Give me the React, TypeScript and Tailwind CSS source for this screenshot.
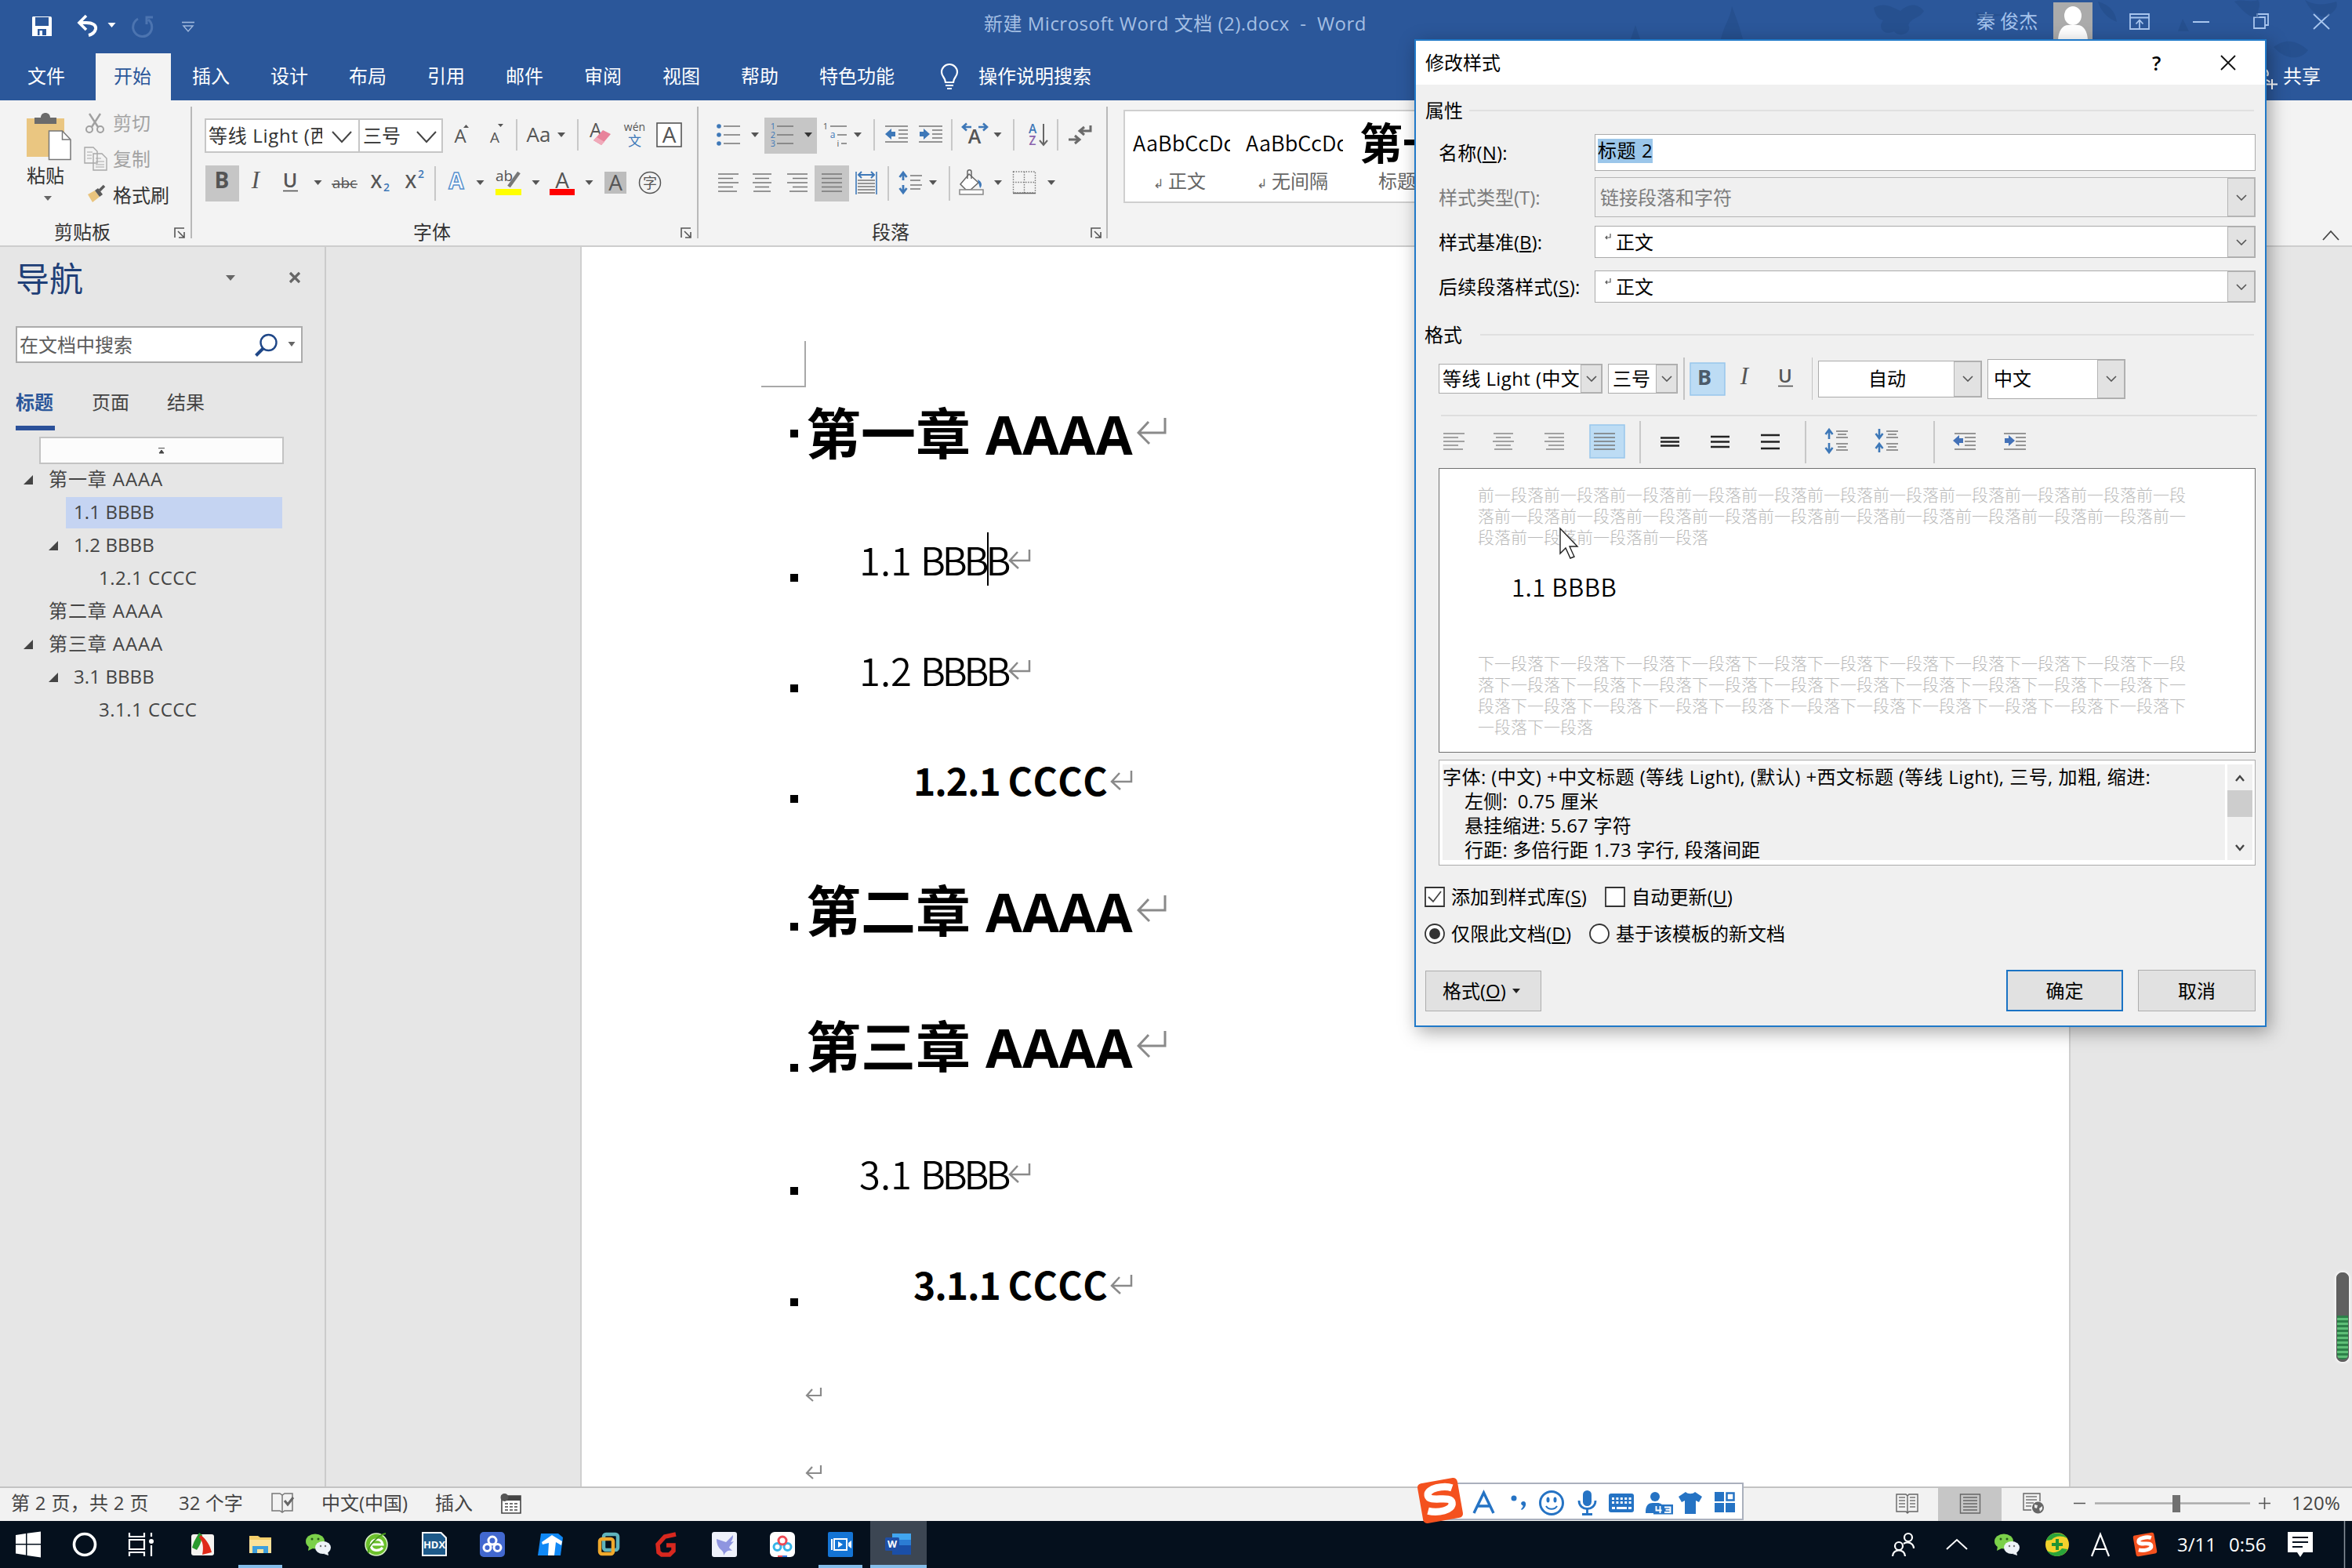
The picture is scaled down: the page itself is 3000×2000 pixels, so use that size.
import React from "react";

type IcProps = { a: number; b: number; y: number; h: number; className?: string; children?: React.ReactNode };

/** Drawing cell spanning a..b horizontally inside a row that starts at y. */
function Ic({ a, b, y, h, className = "", children }: IcProps) {
  return (
    <svg className={`block shrink-0 overflow-visible ${className}`} width={b - a} height={h} viewBox={`${a} ${y} ${b - a} ${h}`}>
      {children}
    </svg>
  );
}

function Caret({ x, y, s = 5, fill = "#555" }: { x: number; y: number; s?: number; fill?: string }) {
  return <path d={`M${x - s} ${y - 3}h${s * 2}l${-s} 6z`} fill={fill} />;
}

function Lines({ rows, c = "#777", w = 1.6 }: { rows: [number, number, number][]; c?: string; w?: number }) {
  return <path d={rows.map(([x1, x2, y]) => `M${x1} ${y}H${x2}`).join("")} stroke={c} strokeWidth={w} fill="none" />;
}

function G({ x, y, s, c = "#555", w = 400, f = "Open Sans", anchor = "middle", children, italic = false }: any) {
  return (
    <text x={x} y={y} fontSize={s} fill={c} fontWeight={w} fontFamily={`"${f}", "Noto Sans CJK SC", sans-serif`} textAnchor={anchor} fontStyle={italic ? "italic" : "normal"}>
      {children}
    </text>
  );
}

const Sep = ({ x, y, h }: { x: number; y: number; h: number }) => <path d={`M${x} ${y}v${h}`} stroke="#c8c8c8" strokeWidth="2" />;
const Launcher = ({ x }: { x: number }) => (
  <path d={`M${x + 1} 303V291H${x + 13}M${x + 5} 295l8 8M${x + 13} 296v7h-7`} stroke="#555" strokeWidth="1.6" fill="none" />
);

/* ---------- title bar ---------- */
function TitleBar() {
  return (
    <div className="relative flex h-[68px] shrink-0 items-start">
      <svg className="absolute top-0 right-0" width="1000" height="128" viewBox="2000 0 1000 128">
        <g fill="#234a87" opacity="0.55">
          <path d="M2195 50c4-18 12-26 14-42 6 16 10 26 14 42zM2080 50l6-18 6 18zM2390 10c14-8 24 0 34 4 10-10 22-10 30 0-6 10-16 8-20 18 6 8-10 18-18 8-12 6-22-4-14-14-8-2-10-8-12-16zM2520 16l40 3-38 4zM2676 2c14 4 22 12 24 26-10-4-20-12-24-26zM2778 40l6-16 8 16zM2850 2c10-4 20 2 30-2 6 8-4 14 2 22-14 2-20-8-32-20zM2940 0c14 8 26 6 40 2 4 10-8 16-14 20-12-2-20-10-26-22zM2900 60c16-12 30-8 44 4-10 14-30 12-44-4z" />
        </g>
      </svg>
      <Ic a={0} b={90} y={0} h={66}>
        <path d="M42 21h22a2 2 0 0 1 2 2v23H41V22z" fill="#fff" />
        <path d="M45 22h17v11H45zM48 37h11v8H48z" fill="#2b579a" />
        <path d="M50.500 39h3.500v6h-3.500z" fill="#fff" />
      </Ic>
      <Ic a={90} b={160} y={0} h={66}>
        <path d="M101 29h9c8 0 13 3 12 8-1 4-5 7-9 8" fill="none" stroke="#fff" strokeWidth="4" />
        <path d="M110 20l-9 9 9 9" fill="none" stroke="#fff" strokeWidth="3.600" />
        <Caret x={142.500} y={32} fill="#fff" />
      </Ic>
      <Ic a={160} b={220} y={0} h={66}>
        <path d="M176 24a12 12 0 1 0 13 1M195 22h-8v9" fill="none" stroke="#4c74b0" strokeWidth="3" />
      </Ic>
      <Ic a={220} b={1255} y={0} h={66}>
        <path d="M232 28.500h16" stroke="#9fb8dc" strokeWidth="1.600" />
        <path d="M234 33l6 7 6-7z" fill="none" stroke="#9fb8dc" strokeWidth="1.400" />
      </Ic>
      <div className="mt-[15px] w-[1266px] tracking-[0.5px] text-[#a5bfe3] whitespace-pre leading-[30px]">新建 Microsoft Word 文档 (2).docx  -  Word</div>
      <div className="mt-[12px] w-[98px] whitespace-pre leading-[30px] text-[#a5c3ec]">秦 俊杰</div>
      <div className="mt-[3px] h-[50px] w-[50px] bg-[#ababab]">
        <svg width="50" height="50" viewBox="0 0 50 50">
          <ellipse cx="25" cy="17" rx="11" ry="12" fill="#fff" />
          <path d="M6 50c0-14 6-21 13-21h12c7 0 13 7 13 21z" fill="#fff" />
        </svg>
      </div>
      <Ic a={2669} b={2770} y={0} h={54}>
        <path d="M2717 18h24v19h-24zM2717 22.500h24M2729 36v-10M2724.500 30.500l4.500-5 4.500 5" fill="none" stroke="#a9c6ee" strokeWidth="1.800" />
      </Ic>
      <Ic a={2770} b={2850} y={0} h={54}>
        <path d="M2797 28h21" stroke="#a9c6ee" strokeWidth="2" />
      </Ic>
      <Ic a={2850} b={2920} y={0} h={54}>
        <path d="M2875 22h14v14h-14zM2879 22v-4h14v14h-4" fill="none" stroke="#a9c6ee" strokeWidth="1.800" />
      </Ic>
      <Ic a={2920} b={3000} y={0} h={54}>
        <path d="M2951 18l20 19M2971 18l-20 19" stroke="#a9c6ee" strokeWidth="1.800" />
      </Ic>
    </div>
  );
}

function TabRow() {
  const tabs = ["插入", "设计", "布局", "引用", "邮件", "审阅", "视图", "帮助", "特色功能"];
  return (
    <div className="relative flex h-[60px] shrink-0 items-start leading-[58px] text-white">
      <div className="w-[122px] pl-[35px]">文件</div>
      <div className="h-[60px] w-[96px] bg-[#f3f3f3] pl-[23px] text-[#2b579a]">开始</div>
      <div className="flex w-[982px] pl-[27px]">
        {tabs.map((t) => (
          <div key={t} className="w-[100px] shrink-0 whitespace-nowrap">{t}</div>
        ))}
      </div>
      <Ic a={1200} b={1248} y={68} h={60}>
        <path d="M1206 105c0-6-5-7-5-13a10 10 0 0 1 20 0c0 6-5 7-5 13zM1206 109h10M1208 113h6" fill="none" stroke="#fff" strokeWidth="2.200" />
      </Ic>
      <div className="w-[1638px]">操作说明搜索</div>
      <Ic a={2886} b={2912} y={68} h={60}>
        <path d="M2887 88a6 6 0 0 1 5 9M2889 102c3 0 5 1 6 3M2898 101v13M2891 107.500h14" fill="none" stroke="#fff" strokeWidth="2" />
      </Ic>
      <div>共享</div>
    </div>
  );
}

/* ---------- ribbon ---------- */
function ClipboardGroup() {
  return (
    <div className="flex w-[246px] shrink-0 flex-col">
      <div className="flex h-[153px]">
        <div className="flex w-[104px] flex-col pl-[34px] pt-[16px]">
          <Ic a={34} b={90} y={144} h={60}>
            <path d="M34 151h48v49H34z" fill="#eac681" />
            <path d="M44 150h8c0-8 12-8 12 0h8v8H44z" fill="#6b6b6b" />
            <path d="M62.500 167h17l10.500 11v25.500H62.500z" fill="#fff" stroke="#777" strokeWidth="1.500" />
            <path d="M79.500 167v11H90" fill="none" stroke="#777" strokeWidth="1.500" />
          </Ic>
          <div className="mt-[5px] leading-[30px]">粘贴</div>
          <svg className="mt-[11px] ml-[22px]" width="10" height="6" viewBox="0 0 10 6"><path d="M0 0h10L5 6z" fill="#666" /></svg>
        </div>
        <div className="flex flex-col pt-[6px] leading-[46px]">
          <div className="flex text-[#a3a3a3]">
            <Ic a={104} b={144} y={134} h={46}>
              <path d="M114 145l11 17M128 145l-11 17" stroke="#a0a0a0" strokeWidth="2.400" fill="none" />
              <circle cx="114" cy="165" r="4" fill="none" stroke="#a0a0a0" strokeWidth="2" />
              <circle cx="128" cy="165" r="4" fill="none" stroke="#a0a0a0" strokeWidth="2" />
            </Ic>
            剪切
          </div>
          <div className="flex text-[#a3a3a3]">
            <Ic a={104} b={144} y={180} h={46}>
              <path d="M108 188h11l5 5v15h-16zM119 196h11l6 6v15h-17z" fill="#f3f3f3" stroke="#a8a8a8" strokeWidth="1.400" />
              <Lines c="#a8a8a8" w={1.200} rows={[[111, 118, 194], [111, 117, 198], [111, 117, 202], [122, 129, 202], [122, 133, 206], [122, 133, 210], [122, 133, 213]]} />
            </Ic>
            复制
          </div>
          <div className="flex">
            <Ic a={104} b={144} y={226} h={46}>
              <path d="M112 248l9-5 6 8-9 7z" fill="#e9c47e" />
              <path d="M121 243l4-3 6 8-4 3z" fill="#5a5a5a" />
              <path d="M127 243l6-6" stroke="#5a5a5a" strokeWidth="3.500" />
            </Ic>
            格式刷
          </div>
        </div>
      </div>
      <div className="flex h-[30px] leading-[30px]">
        <div className="w-[217px] pl-[69px]">剪贴板</div>
        <Ic a={217} b={243} y={281} h={30}><Launcher x={222} /></Ic>
      </div>
    </div>
  );
}

const GroupLine = () => <div className="-ml-[3px] mr-[1px] mt-[8px] h-[168px] w-[2px] shrink-0 bg-[#b9b9b9]" />;

function FontGroup() {
  const y = 151, h = 44, y2 = 211, h2 = 46;
  return (
    <div className="flex w-[646px] shrink-0 flex-col">
      <div className="mt-[23px] flex h-[44px] pl-[15px]">
        <div className="flex h-[44px] w-[198px] shrink-0 items-center border-2 border-[#c6c6c6] bg-white pl-[3px]">
          <div className="w-[147px] shrink-0 overflow-hidden pr-[2px] whitespace-nowrap leading-[30px]"><div className="w-[145px] overflow-hidden tracking-[0.7px]">等线 Light (西</div></div>
          <Ic a={413} b={455} y={y} h={40}><path d="M424 166l12 13 12-13" fill="none" stroke="#444" strokeWidth="2" /></Ic>
        </div>
        <div className="-ml-[2px] flex h-[44px] w-[108px] shrink-0 items-center border-2 border-[#c6c6c6] bg-white pl-[4px]">
          <div className="w-[58px] shrink-0 leading-[30px]">三号</div>
          <Ic a={521} b={563} y={y} h={40}><path d="M532 166l12 13 12-13" fill="none" stroke="#444" strokeWidth="2" /></Ic>
        </div>
        <Ic a={565} b={612} y={y} h={h}><G x={587} y={182} s={24}>A</G><path d="M591 163l3.500-4 3.500 4z" fill="#555" /></Ic>
        <Ic a={612} b={660} y={y} h={h}><G x={631} y={182} s={19}>A</G><path d="M635 158l3.500 4 3.500-4z" fill="#555" /><Sep x={659} y={152} h={40} /></Ic>
        <Ic a={660} b={738} y={y} h={h}><G x={687} y={181} s={26}>Aa</G><Caret x={716} y={172} /><Sep x={737} y={152} h={40} /></Ic>
        <Ic a={738} b={790} y={y} h={h}>
          <G x={760} y={175} s={25}>A</G>
          <path d="M757 179l12-13 10 5-12 14z" fill="#e8839b" /><path d="M757 179l4-4 10 6-4 4z" fill="#f0a9b9" />
        </Ic>
        <Ic a={790} b={830} y={y} h={h}><G x={809.500} y={167} s={14}>wén</G><G x={809.500} y={186} s={17} c="#3e78b8">文</G></Ic>
        <Ic a={830} b={880} y={y} h={h}><rect x="838" y="157" width="31" height="30" fill="#fff" stroke="#555" strokeWidth="1.600" /><G x={853.500} y={182} s={28}>A</G></Ic>
      </div>
      <div className="mt-[16px] flex h-[46px] pl-[16px]">
        <Ic a={262} b={305} y={y2} h={h2} className="bg-[#c6c6c6]"><G x={283} y={240} s={28} w={700}>B</G></Ic>
        <Ic a={305} b={347} y={y2} h={h2}><G x={326} y={240} s={31} f="Liberation Serif" w={400} italic>I</G></Ic>
        <Ic a={347} b={418} y={y2} h={h2}><G x={370} y={239} s={25} w={600}>U</G><path d="M361 243.500h19" stroke="#555" strokeWidth="1.600" /><Caret x={405.500} y={233} /></Ic>
        <Ic a={418} b={463} y={y2} h={h2}><G x={439.500} y={240} s={19}>abc</G><path d="M423 235h33" stroke="#555" strokeWidth="1.600" /></Ic>
        <Ic a={463} b={507} y={y2} h={h2}><G x={480} y={240} s={23} w={600}>X</G><G x={493} y={244} s={14} w={600} c="#3e78b8">2</G></Ic>
        <Ic a={507} b={556} y={y2} h={h2}><G x={524} y={240} s={23} w={600}>X</G><G x={537} y={227} s={14} w={600} c="#3e78b8">2</G><Sep x={555} y={212} h={44} /></Ic>
        <Ic a={556} b={625} y={y2} h={h2}>
          <text x="582" y="241" fontSize="28" fontFamily='"Open Sans"' fontWeight="700" textAnchor="middle" fill="#fff" stroke="#5b93cf" strokeWidth="1.500">A</text>
          <Caret x={612.500} y={233} />
        </Ic>
        <Ic a={625} b={695} y={y2} h={h2}>
          <G x={643} y={231} s={19}>ab</G><path d="M662 220l-13 18" stroke="#777" strokeWidth="4.500" /><path d="M632 241h33v8h-33z" fill="#ff0" /><Caret x={683.500} y={233} />
        </Ic>
        <Ic a={695} b={765} y={y2} h={h2}><G x={717} y={240} s={28}>A</G><path d="M701 241h32v8h-32z" fill="#f00" /><Caret x={751.500} y={233} /></Ic>
        <Ic a={765} b={807} y={y2} h={h2}><path d="M771 219h28v28h-28z" fill="#bdbdbd" /><G x={785} y={243} s={28}>A</G></Ic>
        <Ic a={807} b={860} y={y2} h={h2}><circle cx="829" cy="233" r="13.500" fill="none" stroke="#555" strokeWidth="1.500" /><G x={829} y={240} s={18}>字</G></Ic>
      </div>
      <div className="mt-[24px] flex h-[30px] leading-[30px]">
        <div className="w-[614px] pl-[281px]">字体</div>
        <Ic a={860} b={890} y={281} h={30}><Launcher x={868} /></Ic>
      </div>
    </div>
  );
}

const blue = "#3e78b8";
const arrowL = "l8-7v4h5v6h-5v4z";
const arrowR = "l-8-7v4h-5v6h5v4z";

function ParagraphGroup() {
  const y = 150, h = 46, y2 = 211, h2 = 46;
  return (
    <div className="flex w-[522px] shrink-0 flex-col">
      <div className="mt-[22px] flex h-[46px] pl-[8px]">
        <Ic a={900} b={975} y={y} h={h}>
          {[161, 172, 183].map((v) => <circle key={v} cx="917" cy={v} r="2.800" fill={blue} />)}
          <Lines rows={[[923, 944, 161], [923, 944, 172], [923, 944, 183]]} /><Caret x={963} y={172} />
        </Ic>
        <Ic a={975} b={1042} y={y} h={h} className="bg-[#c6c6c6]">
          <G x={986} y={165} s={11} c={blue}>1</G><G x={986} y={176} s={11} c={blue}>2</G><G x={986} y={187} s={11} c={blue}>3</G>
          <Lines rows={[[991, 1012, 161], [991, 1012, 172], [991, 1012, 183]]} /><Caret x={1031} y={172} fill="#333" />
        </Ic>
        <Ic a={1042} b={1116} y={y} h={h}>
          <G x={1053} y={165} s={11}>1</G><G x={1062} y={176} s={12} c={blue}>a</G><G x={1069} y={187} s={11}>i</G>
          <Lines rows={[[1059, 1080, 161], [1068, 1080, 172], [1073, 1080, 183]]} /><Caret x={1094} y={172} /><Sep x={1115} y={152} h={40} />
        </Ic>
        <Ic a={1116} b={1165} y={y} h={h}>
          <Lines rows={[[1129, 1158, 161], [1146, 1158, 166], [1146, 1158, 171], [1146, 1158, 176], [1129, 1158, 181]]} /><path d={"M1129 171" + arrowL} fill={blue} />
        </Ic>
        <Ic a={1165} b={1215} y={y} h={h}>
          <Lines rows={[[1172, 1202, 161], [1189, 1202, 166], [1189, 1202, 171], [1189, 1202, 176], [1172, 1202, 181]]} /><path d={"M1186 171" + arrowR} fill={blue} /><Sep x={1214} y={152} h={40} />
        </Ic>
        <Ic a={1215} b={1294} y={y} h={h}>
          <G x={1243} y={183} s={25} w={600}>A</G>
          <path d="M1239 162h-10M1233 157.500l-5 4.500 5 4.500M1248 162h10M1254 157.500l5 4.500-5 4.500" stroke={blue} strokeWidth="2.600" fill="none" /><Caret x={1272.500} y={172} /><Sep x={1293} y={152} h={40} />
        </Ic>
        <Ic a={1294} b={1350} y={y} h={h}>
          <G x={1317} y={170} s={15.500} w={600} c={blue}>A</G><G x={1317} y={185} s={15.500} w={600} c="#8a62ad">Z</G><path d="M1331 158v26M1326 179l5 6 5-6" stroke="#666" strokeWidth="2" fill="none" /><Sep x={1349} y={152} h={40} />
        </Ic>
        <Ic a={1350} b={1400} y={y} h={h}>
          <path d="M1391 160v7h-13M1383 162l-6 5 6 5M1363 178h13M1371 173l6 5-6 5" stroke="#6b6b6b" strokeWidth="3" fill="none" />
        </Ic>
      </div>
      <div className="mt-[15px] flex h-[46px] pl-[8px]">
        <Ic a={900} b={950} y={y2} h={h2}><Lines rows={[[916, 942, 222], [916, 935, 227.500], [916, 942, 233], [916, 935, 238.500], [916, 940, 244]]} /></Ic>
        <Ic a={950} b={994} y={y2} h={h2}><Lines rows={[[960, 984, 222], [963, 981, 227.500], [960, 984, 233], [963, 981, 238.500], [961, 983, 244]]} /></Ic>
        <Ic a={994} b={1039} y={y2} h={h2}><Lines rows={[[1004, 1030, 222], [1011, 1030, 227.500], [1004, 1030, 233], [1011, 1030, 238.500], [1007, 1030, 244]]} /></Ic>
        <Ic a={1039} b={1083} y={y2} h={h2} className="bg-[#c6c6c6]"><Lines rows={[[1048, 1074, 222], [1048, 1074, 227.500], [1048, 1074, 233], [1048, 1074, 238.500], [1048, 1074, 244]]} /></Ic>
        <Ic a={1083} b={1134} y={y2} h={h2}>
          <path d="M1092 219v29M1118 219v29" stroke={blue} strokeWidth="1.600" /><path d="M1095 223h20M1099 219l-4 4 4 4M1111 219l4 4-4 4" stroke={blue} strokeWidth="2" fill="none" />
          <Lines rows={[[1094, 1116, 230], [1094, 1116, 234], [1094, 1116, 238], [1094, 1116, 242], [1094, 1116, 246]]} /><Sep x={1133} y={212} h={44} />
        </Ic>
        <Ic a={1134} b={1212} y={y2} h={h2}>
          <path d="M1152 221v9M1152 236v9M1147.500 226l4.500-6 4.500 6M1147.500 240l4.500 6 4.500-6" stroke={blue} strokeWidth="2.800" fill="none" />
          <Lines rows={[[1161, 1176, 224], [1161, 1174, 230], [1161, 1176, 236], [1161, 1174, 241]]} /><Caret x={1190} y={233} /><Sep x={1211} y={212} h={44} />
        </Ic>
        <Ic a={1212} b={1283} y={y2} h={h2}>
          <path d="M1236 222l12 11-10 9h-6l-7-7z" fill="#fff" stroke="#666" strokeWidth="1.500" /><path d="M1234 228v-9c0-3 5-3 5 0v9" fill="none" stroke="#666" strokeWidth="1.500" /><path d="M1247 229c6 3 6 8 3 11z" fill={blue} />
          <path d="M1224 242h30v6h-30z" fill="#fff" stroke="#888" strokeWidth="1.500" /><Caret x={1273} y={233} />
        </Ic>
        <Ic a={1283} b={1360} y={y2} h={h2}>
          <path d="M1292.500 219h28v27h-28zM1306.500 219v27M1292 232.500h28" fill="none" stroke="#777" strokeWidth="1.400" strokeDasharray="1.500 1.700" /><path d="M1292 246.500h29" stroke="#666" strokeWidth="1.500" /><Caret x={1341} y={233} />
        </Ic>
      </div>
      <div className="mt-[24px] flex h-[30px] leading-[30px]">
        <div className="w-[493px] pl-[220px]">段落</div>
        <Ic a={1385} b={1413} y={281} h={30}><Launcher x={1391} /></Ic>
      </div>
    </div>
  );
}

function StyleGallery() {
  return (
    <div className="ml-[19px] mt-[12px] flex h-[119px] w-[600px] shrink-0 border-2 border-[#cfcfcf] bg-white">
      <div className="flex w-[144px] flex-col pl-[10px]">
        <div className="mt-[22px] w-[124px] overflow-hidden font-['Noto_Sans_CJK_SC'] text-[27px] leading-[36px] font-[350] whitespace-nowrap text-black">AaBbCcDd</div>
        <div className="mt-[16px] pl-[26px] leading-[30px] text-[#666]"><span className="mr-[3px] inline-block w-[16px] text-[16px]">↲</span>正文</div>
      </div>
      <div className="flex w-[147px] flex-col pl-[10px]">
        <div className="mt-[22px] w-[124px] overflow-hidden font-['Noto_Sans_CJK_SC'] text-[27px] leading-[36px] font-[350] whitespace-nowrap text-black">AaBbCcDd</div>
        <div className="mt-[16px] pl-[14px] leading-[30px] whitespace-nowrap text-[#666]"><span className="mr-[3px] inline-block w-[16px] text-[16px]">↲</span>无间隔</div>
      </div>
      <div className="flex flex-col pl-[8px]">
        <div className="mt-[8px] h-[60px] font-['Noto_Sans_CJK_SC'] text-[55px] leading-[58px] font-bold whitespace-nowrap text-black">第一</div>
        <div className="mt-[6px] pl-[24px] leading-[30px] text-[#666]">标题</div>
      </div>
    </div>
  );
}

function Ribbon() {
  return (
    <div className="flex h-[187px] shrink-0 border-b-2 border-[#cdcdcd] bg-[#f3f3f3] text-[#333]">
      <ClipboardGroup />
      <GroupLine />
      <FontGroup />
      <GroupLine />
      <ParagraphGroup />
      <GroupLine />
      <StyleGallery />
      <Ic a={2940} b={3000} y={128} h={185} className="ml-auto"><path d="M2963 306l10-11 10 11" fill="none" stroke="#444" strokeWidth="1.800" /></Ic>
    </div>
  );
}

/* ---------- navigation pane ---------- */
const outline: { t: string; lv: number; open?: boolean; on?: boolean }[] = [
  { t: "第一章 AAAA", lv: 0, open: true },
  { t: "1.1 BBBB", lv: 1, on: true },
  { t: "1.2 BBBB", lv: 1, open: true },
  { t: "1.2.1 CCCC", lv: 2 },
  { t: "第二章 AAAA", lv: 0 },
  { t: "第三章 AAAA", lv: 0, open: true },
  { t: "3.1 BBBB", lv: 1, open: true },
  { t: "3.1.1 CCCC", lv: 2 },
];
const indent = ["pl-[30px]", "pl-[62px]", "pl-[94px]"];
const spacing = ["tracking-[0.9px]", "tracking-[0.1px]", "tracking-[0.5px]"];

function NavPane() {
  return (
    <div className="flex w-[416px] shrink-0 flex-col border-r-2 border-[#cbcbcb]">
      <div className="flex h-[82px] items-center pl-[20px]">
        <div className="w-[268px] text-[43px] leading-[60px] text-[#1f3f77]">导航</div>
        <svg className="mt-[-4px] block" width="95" height="16" viewBox="288 346 95 16">
          <path d="M288 351h12l-6 7z" fill="#666" />
          <path d="M370 348l12 12M382 348l-12 12" stroke="#666" strokeWidth="3.200" />
        </svg>
      </div>
      <div className="mt-[19px] ml-[20px] flex h-[47px] w-[366px] items-center border-2 border-[#ababab] bg-white pl-[3px] text-[#5c5c5c]">
        <div className="w-[290px] leading-[30px]">在文档中搜索</div>
        <Ic a={315} b={380} y={418} h={43}>
          <circle cx="342.500" cy="437" r="10" fill="none" stroke="#1f4788" strokeWidth="2.400" />
          <path d="M335.500 444.500l-9 9" stroke="#1f4788" strokeWidth="4" />
          <Caret x={372} y={439} s={4.500} fill="#666" />
        </Ic>
      </div>
      <div className="mt-[35px] flex h-[30px] pl-[20px] leading-[30px] text-[#444]">
        <div className="w-[97px] font-bold text-[#2b579a]">标题</div>
        <div className="w-[96px]">页面</div>
        <div>结果</div>
      </div>
      <div className="mt-[15px] ml-[20px] h-[6px] w-[50px] bg-[#2b519a]" />
      <div className="mt-[8px] ml-[50px] flex h-[35px] w-[312px] items-center justify-center border-2 border-[#c3c3c3] bg-[#fcfcfc]">
        <svg width="8" height="8" viewBox="0 0 8 8"><path d="M0 .7h8M1 7h6L4 3z" stroke="#444" strokeWidth="1" fill="#444" /></svg>
      </div>
      <div className="-mt-[1px]">
        {outline.map((o) => (
          <div key={o.t} className={`flex h-[42px] items-center text-[#444] ${indent[o.lv]}`}>
            <div className="w-[22px] shrink-0">
              {o.open && <svg width="12" height="12" viewBox="0 0 12 12"><path d="M12 0v12H0z" fill="#444" /></svg>}
            </div>
            <div className={`flex h-[40px] items-center pb-[2px] pl-[10px] leading-[38px] whitespace-nowrap ${spacing[o.lv]} ${o.on ? "w-[276px] bg-[#c5d4f2]" : ""}`}>{o.t}</div>
          </div>
        ))}
      </div>
    </div>
  );
}

/* ---------- document ---------- */
function Ret({ big = false }: { big?: boolean }) {
  return big ? (
    <svg className="mt-[33px] ml-[2px] shrink-0" width="38" height="36" viewBox="0 0 38 36"><path d="M36 0v19H2M15 5L2 19l14 14" fill="none" stroke="#8a8a8a" strokeWidth="3" /></svg>
  ) : (
    <svg className="mt-[38px] shrink-0" width="29" height="28" viewBox="0 0 29 28"><path d="M27 3v14H2M12 6L2 17l11 10" fill="none" stroke="#8a8a8a" strokeWidth="2.500" /></svg>
  );
}

type LineProps = { kind: "h1" | "h2" | "h3"; top: string; dot: string; width: string; children: React.ReactNode };
const kinds = {
  h1: "ml-[9px] mr-[4px] text-[70px] leading-[100px] font-bold whitespace-pre",
  h2: "ml-[77px] mr-[1px] text-[49px] leading-[105px] font-[350] whitespace-pre",
  h3: "ml-[146px] mr-[1px] text-[48px] leading-[105px] font-bold whitespace-pre",
};

function DocLine({ kind, top, dot, width, children }: LineProps) {
  return (
    <div className={`flex h-[110px] shrink-0 items-start pl-[266px] text-black ${top}`}>
      <div className={`mr-[1px] h-[10px] w-[10px] shrink-0 bg-black ${dot}`} />
      <div className={`shrink-0 ${kinds[kind]} ${width}`}>{children}</div>
      <Ret big={kind === "h1"} />
    </div>
  );
}

function Chapter({ name }: { name: string }) {
  return <>{name}<span className="ml-[19px] font-['Open_Sans'] text-[68px] font-bold">AAAA</span></>;
}

const Sub = ({ n, t }: { n: string; t: string }) => <>{n} <span className="tracking-[-4.1px]">{t}</span></>;
const SubSub = ({ n, t }: { n: string; t: string }) => <><span className="tracking-[-1.1px]">{n} </span><span className="tracking-[2.3px]">{t}</span></>;

function Page() {
  return (
    <div className="ml-[324px] flex w-[1901px] shrink-0 flex-col overflow-hidden border-x-2 border-[#cfcfcf] bg-white font-['Noto_Sans_CJK_SC',sans-serif]">
      <div className="mt-[120px] ml-[229px] h-[59px] w-[57px] shrink-0 border-r-2 border-b-2 border-[#a8a8a8]" />
      <DocLine kind="h1" top="mt-[6px]" dot="mt-[48px]" width="w-[416px]"><Chapter name="第一章" /></DocLine>
      <DocLine kind="h2" top="mt-[50px]" dot="mt-[72px]" width="w-[189px]">
        <span className="relative"><Sub n="1.1" t="BBBB" /><span className="absolute top-[2px] left-[163px] h-[68px] w-[2px] bg-black" /></span>
      </DocLine>
      <DocLine kind="h2" top="mt-[31px]" dot="mt-[72px]" width="w-[189px]"><Sub n="1.2" t="BBBB" /></DocLine>
      <DocLine kind="h3" top="mt-[31px]" dot="mt-[72px]" width="w-[250px]"><SubSub n="1.2.1" t="CCCC" /></DocLine>
      <DocLine kind="h1" top="mt-[57px]" dot="mt-[68px]" width="w-[416px]"><Chapter name="第二章" /></DocLine>
      <DocLine kind="h1" top="mt-[63px]" dot="mt-[75px]" width="w-[416px]"><Chapter name="第三章" /></DocLine>
      <DocLine kind="h2" top="mt-[51px]" dot="mt-[71px]" width="w-[189px]"><Sub n="3.1" t="BBBB" /></DocLine>
      <DocLine kind="h3" top="mt-[32px]" dot="mt-[71px]" width="w-[250px]"><SubSub n="3.1.1" t="CCCC" /></DocLine>
      <svg className="mt-[74px] ml-[285px] shrink-0" width="22" height="20" viewBox="0 0 22 20"><path d="M20 1v10H2M9 3l-7 8 8 7" fill="none" stroke="#8a8a8a" strokeWidth="2.200" /></svg>
      <svg className="mt-[79px] ml-[285px] shrink-0" width="22" height="20" viewBox="0 0 22 20"><path d="M20 1v10H2M9 3l-7 8 8 7" fill="none" stroke="#8a8a8a" strokeWidth="2.200" /></svg>
    </div>
  );
}

/* ---------- dialog ---------- */
function Drop({ w }: { w: "w-[27px]" | "w-[35px]" }) {
  return (
    <div className={`flex h-full shrink-0 items-center justify-center border border-[#b4b4b4] bg-[#e2e2e2] ${w}`}>
      <svg width="14" height="8" viewBox="0 0 14 8"><path d="M1 1l6 6 6-6" fill="none" stroke="#555" strokeWidth="1.600" /></svg>
    </div>
  );
}

const Tiny = () => (
  <svg className="mr-[6px] mb-[14px] shrink-0" width="8" height="8" viewBox="0 0 8 8"><path d="M7 0v5H1M3 3L1 5l2 2" fill="none" stroke="#555" strokeWidth="1.200" /></svg>
);

const before = ["前一段落前一段落前一段落前一段落前一段落前一段落前一段落前一段落前一段落前一段落前一段", "落前一段落前一段落前一段落前一段落前一段落前一段落前一段落前一段落前一段落前一段落前一", "段落前一段落前一段落前一段落"];
const after = ["下一段落下一段落下一段落下一段落下一段落下一段落下一段落下一段落下一段落下一段落下一段", "落下一段落下一段落下一段落下一段落下一段落下一段落下一段落下一段落下一段落下一段落下一", "段落下一段落下一段落下一段落下一段落下一段落下一段落下一段落下一段落下一段落下一段落下", "一段落下一段落"];

function Dialog() {
  const y = 537, h = 54;
  return (
    <div className="absolute top-[50px] left-[1804px] flex h-[1260px] w-[1087px] flex-col border-2 border-[#2079c8] bg-[#f0f0f0] leading-[30px] text-black shadow-[4px_6px_22px_rgba(0,0,0,0.35)]">
      <div className="flex h-[56px] shrink-0 items-center bg-white pl-[12px]">
        <div className="w-[927px]">修改样式</div>
        <div className="w-[87px] text-[25px] font-semibold">?</div>
        <svg width="20" height="20" viewBox="0 0 20 20"><path d="M1 1l18 18M19 1L1 19" stroke="#111" strokeWidth="1.800" /></svg>
      </div>
      <div className="mt-[18px] flex h-[30px] items-center pl-[12px]">
        <div className="w-[56px]">属性</div>
        <div className="mr-[14px] h-[2px] flex-1 bg-[#e0e0e0]" />
      </div>
      <div className="mt-[15px] flex h-[47px] items-center pl-[29px]">
        <div className="w-[199px] tracking-[0.2px]">名称(<u>N</u>):</div>
        <div className="h-full w-[843px] border-[1.500px] border-[#ababab] bg-white pt-[5px] pl-[3px]"><span className="inline-block h-[31px] bg-[#9bc6ea] leading-[30px] tracking-[0.6px]">标题 2</span></div>
      </div>
      <div className="mt-[8px] flex h-[51px] items-center pl-[29px] text-[#7d7d7d]">
        <div className="w-[199px]">样式类型(T):</div>
        <div className="flex h-full w-[843px] items-center justify-between border-[1.500px] border-[#b5b5b5] pl-[6px]">链接段落和字符<Drop w="w-[35px]" /></div>
      </div>
      <div className="mt-[11px] flex h-[41px] items-center pl-[29px]">
        <div className="w-[199px]">样式基准(<u>B</u>):</div>
        <div className="flex h-full w-[843px] items-center border-[1.500px] border-[#ababab] bg-white pl-[12px]"><Tiny /><span className="flex-1">正文</span><Drop w="w-[35px]" /></div>
      </div>
      <div className="mt-[16px] flex h-[41px] items-center pl-[29px]">
        <div className="w-[199px] tracking-[0.3px] whitespace-nowrap">后续段落样式(<u>S</u>):</div>
        <div className="flex h-full w-[843px] items-center border-[1.500px] border-[#ababab] bg-white pl-[12px]"><Tiny /><span className="flex-1">正文</span><Drop w="w-[35px]" /></div>
      </div>
      <div className="mt-[26px] flex h-[30px] items-center pl-[11px]">
        <div className="w-[71px]">格式</div>
        <div className="mr-[14px] h-[2px] flex-1 bg-[#e0e0e0]" />
      </div>
      <div className="mt-[14px] flex h-[54px] items-center pl-[29px]">
        <div className="flex h-[38px] w-[209px] items-center justify-between border-[1.500px] border-[#ababab] bg-white pl-[4px]"><div className="w-[176px] overflow-hidden tracking-[0.4px] whitespace-nowrap">等线 Light (中文</div><Drop w="w-[27px]" /></div>
        <div className="ml-[7px] flex h-[38px] w-[89px] items-center border-[1.500px] border-[#ababab] bg-white pl-[5px]"><div className="flex-1">三号</div><Drop w="w-[27px]" /></div>
        <div className="ml-[7px] h-[54px] w-[1.500px] bg-[#c4c4c4]" />
        <svg className="ml-[6px]" width="46" height="43" viewBox="2155 461 46 43"><rect x="2156" y="462" width="44" height="41" fill="#bddcf4" stroke="#98c6ec" strokeWidth="1.500" /><G x={2174} y={490} s={27} w={700} c="#4c5b6b">B</G></svg>
        <svg width="110" height="54" viewBox="2201 456 110 54"><G x={2225} y={490} s={31} f="Liberation Serif" w={400} italic>I</G><G x={2277} y={488} s={24} w={600}>U</G><path d="M2268 492.500h19" stroke="#555" strokeWidth="1.600" /></svg>
        <div className="h-[54px] w-[1.500px] bg-[#c4c4c4]" />
        <div className="ml-[7px] flex h-[47px] w-[209px] items-center justify-between border-[1.500px] border-[#ababab] bg-white"><div className="w-[172px] pl-[63px]">自动</div><Drop w="w-[35px]" /></div>
        <div className="ml-[7px] flex h-[51px] w-[176px] items-center justify-between border-[1.500px] border-[#ababab] bg-white"><div className="w-[138px] pl-[7px]">中文</div><Drop w="w-[35px]" /></div>
      </div>
      <div className="mt-[19px] mr-[10px] ml-[32px] h-[2px] bg-[#dedede]" />
      <div className="mt-[6px] flex h-[54px] pl-[29px]">
        <Ic a={1835} b={1890} y={y} h={h}><Lines c="#888" rows={[[1841, 1868, 553], [1841, 1860, 558], [1841, 1868, 563], [1841, 1860, 568], [1841, 1866, 573]]} /></Ic>
        <Ic a={1890} b={1955} y={y} h={h}><Lines c="#888" rows={[[1905, 1930, 553], [1908, 1927, 558], [1904, 1931, 563], [1908, 1927, 568], [1906, 1929, 573]]} /></Ic>
        <Ic a={1955} b={2027} y={y} h={h}><Lines c="#888" rows={[[1970, 1995, 553], [1975, 1995, 558], [1970, 1995, 563], [1975, 1995, 568], [1972, 1995, 573]]} /></Ic>
        <Ic a={2027} b={2093} y={y} h={h}>
          <rect x="2028" y="542" width="44" height="42" fill="#bddcf4" stroke="#98c6ec" strokeWidth="1.500" />
          <Lines rows={[[2033, 2060, 553], [2033, 2060, 558], [2033, 2060, 563], [2033, 2060, 568], [2033, 2060, 573]]} /><Sep x={2092} y={537} h={54} />
        </Ic>
        <Ic a={2093} b={2160} y={y} h={h}><Lines c="#222" w={2.600} rows={[[2118, 2142, 558.500], [2118, 2142, 563.500], [2118, 2142, 568.500]]} /></Ic>
        <Ic a={2160} b={2225} y={y} h={h}><Lines c="#222" w={2.600} rows={[[2182, 2206, 557], [2182, 2206, 563.500], [2182, 2206, 570]]} /></Ic>
        <Ic a={2225} b={2304} y={y} h={h}><Lines c="#222" w={2.600} rows={[[2246, 2270, 555], [2246, 2270, 563.500], [2246, 2270, 572]]} /><Sep x={2303} y={537} h={54} /></Ic>
        <Ic a={2304} b={2375} y={y} h={h}>
          <path d="M2333 550v10M2333 565v10M2328.500 554l4.500-6 4.500 6M2328.500 571l4.500 6 4.500-6" stroke={blue} strokeWidth="2.600" fill="none" />
          <Lines rows={[[2342, 2357, 550], [2344, 2355, 554], [2342, 2357, 558], [2342, 2357, 566], [2344, 2355, 570], [2342, 2357, 574]]} />
        </Ic>
        <Ic a={2375} b={2468} y={y} h={h}>
          <path d="M2397 547v10M2397 567v10M2392.500 553l4.500 6 4.500-6M2392.500 572l4.500-6 4.500 6" stroke={blue} strokeWidth="2.600" fill="none" />
          <Lines rows={[[2406, 2421, 550], [2408, 2419, 554], [2406, 2421, 558], [2406, 2421, 566], [2408, 2419, 570], [2406, 2421, 574]]} /><Sep x={2467} y={537} h={54} />
        </Ic>
        <Ic a={2468} b={2540} y={y} h={h}><Lines rows={[[2493, 2520, 553], [2506, 2520, 558], [2506, 2520, 563], [2506, 2520, 568], [2493, 2520, 573]]} /><path d={"M2491 562" + arrowL} fill="#4472b8" /></Ic>
        <Ic a={2540} b={2600} y={y} h={h}><Lines rows={[[2556, 2584, 553], [2571, 2584, 558], [2571, 2584, 563], [2571, 2584, 568], [2556, 2584, 573]]} /><path d={"M2570 562" + arrowR} fill="#4472b8" /></Ic>
      </div>
      <div className="mt-[6px] ml-[29px] flex h-[363px] w-[1042px] shrink-0 flex-col border-[1.500px] border-[#707070] bg-white pl-[49px] font-['Noto_Sans_CJK_SC'] text-[21px] leading-[27px] font-light whitespace-nowrap text-[#b9b9b9]">
        <div className="mt-[19px]">{before.map((t) => <div key={t}>{t}</div>)}</div>
        <div className="mt-[31px] ml-[43px] text-[31px] leading-[38px] font-[350] tracking-[0.5px] text-black">1.1 BBBB</div>
        <div className="mt-[65px]">{after.map((t) => <div key={t}>{t}</div>)}</div>
      </div>
      <div className="mt-[9px] ml-[29px] flex h-[135px] w-[1042px] shrink-0 border-[1.500px] border-[#ababab] bg-white pt-[5px] pb-[6px]">
        <div className="mr-[3px] ml-[4px] w-[998px] bg-[#f0f0f0] leading-[31px] tracking-[0.2px] whitespace-pre">
          <div className="tracking-[0.45px]">字体: (中文) +中文标题 (等线 Light), (默认) +西文标题 (等线 Light), 三号, 加粗, 缩进:</div>
          <div className="pl-[28px]">左侧:  0.75 厘米</div>
          <div className="pl-[28px]">悬挂缩进: 5.67 字符</div>
          <div className="h-[28px] pl-[28px]">行距: 多倍行距 1.73 字行, 段落间距</div>
        </div>
        <div className="flex w-[32px] flex-col items-center bg-[#f0f0f0]">
          <svg className="mt-[13px]" width="12" height="10" viewBox="0 0 12 10"><path d="M1 8l5-6 5 6" fill="none" stroke="#444" strokeWidth="2.400" /></svg>
          <div className="mt-[10px] h-[34px] w-[32px] bg-[#cdcdcd]" />
          <svg className="mt-[34px]" width="12" height="10" viewBox="0 0 12 10"><path d="M1 2l5 6 5-6" fill="none" stroke="#444" strokeWidth="2.400" /></svg>
        </div>
      </div>
      <div className="mt-[25px] flex h-[30px] shrink-0 items-center pl-[11px] whitespace-nowrap">
        <svg className="mr-[8px]" width="26" height="26" viewBox="0 0 26 26"><path d="M1 1h24v24H1z" fill="#fff" stroke="#333" strokeWidth="1.800" /><path d="M5 13l6 6L21 6" fill="none" stroke="#444" strokeWidth="1.800" /></svg>
        <div className="w-[196px] tracking-[0.2px]">添加到样式库(<u>S</u>)</div>
        <svg className="mr-[8px]" width="26" height="26" viewBox="0 0 26 26"><path d="M1 1h24v24H1z" fill="#fff" stroke="#333" strokeWidth="1.800" /></svg>
        <div className="tracking-[0.2px]">自动更新(<u>U</u>)</div>
      </div>
      <div className="mt-[17px] flex h-[30px] shrink-0 items-center pl-[11px] whitespace-nowrap">
        <svg className="mr-[8px]" width="26" height="26" viewBox="0 0 26 26"><circle cx="13" cy="13" r="12" fill="#fff" stroke="#333" strokeWidth="1.800" /><circle cx="13" cy="13" r="7" fill="#333" /></svg>
        <div className="w-[176px] tracking-[0.2px]">仅限此文档(<u>D</u>)</div>
        <svg className="mr-[8px]" width="26" height="26" viewBox="0 0 26 26"><circle cx="13" cy="13" r="12" fill="#fff" stroke="#333" strokeWidth="1.800" /></svg>
        <div>基于该模板的新文档</div>
      </div>
      <div className="mt-[31px] flex h-[53px] shrink-0 items-center pl-[12px]">
        <div className="flex h-[52px] w-[148px] items-center border-[1.500px] border-[#adadad] bg-[#e1e1e1] pl-[21px] whitespace-nowrap">格式(<u>O</u>)
          <svg className="ml-[8px]" width="10" height="6" viewBox="0 0 10 6"><path d="M0 0h10L5 6z" fill="#222" /></svg>
        </div>
        <div className="ml-[593px] flex h-[53px] w-[149px] items-center justify-center border-[2.500px] border-[#1a73c4] bg-[#e1e1e1]">确定</div>
        <div className="ml-[19px] flex h-[53px] w-[150px] items-center justify-center border-[1.500px] border-[#adadad] bg-[#e1e1e1]">取消</div>
      </div>
    </div>
  );
}

/* ---------- status bar ---------- */
function StatusBar() {
  const y = 1898, h = 42;
  return (
    <div className="flex h-[44px] shrink-0 border-t-2 border-[#c3c3c3] bg-[#f2f2f2] leading-[38px] whitespace-pre text-[#444]">
      <div className="w-[213px] pl-[14px] tracking-[0.3px]">第 2 页，共 2 页</div>
      <div className="w-[125px] pl-[15px]">32 个字</div>
      <Ic a={338} b={410} y={y} h={h}>
        <path d="M347 1905h10l3 2 3-2h10v22h-10l-3 2-3-2h-10zM360 1907v21" fill="none" stroke="#777" strokeWidth="1.500" /><path d="M363 1914l4 5 7-9" stroke="#666" strokeWidth="3" fill="none" />
      </Ic>
      <div className="w-[145px]">中文(中国)</div>
      <div className="w-[75px]">插入</div>
      <Ic a={630} b={680} y={y} h={h}>
        <path d="M640 1908h24v22h-24z" fill="#fff" stroke="#444" strokeWidth="1.600" /><path d="M640 1908h24v6h-24z" fill="#444" /><circle cx="643.500" cy="1910" r="5" fill="#555" />
        <path d="M644 1918h17M644 1922h17M644 1926h17" stroke="#444" strokeWidth="1.500" strokeDasharray="4 2" />
      </Ic>
      <Ic a={2400} b={2472} y={y} h={h} className="ml-auto">
        <path d="M2419 1906h12l2 2 2-2h11v22h-11l-2 2-2-2h-12zM2433 1908v21" fill="none" stroke="#666" strokeWidth="1.400" />
        <Lines c="#777" w={1.300} rows={[1910, 1914, 1918, 1922].flatMap((v) => [[2422, 2430, v], [2436, 2443, v]] as [number, number, number][])} />
      </Ic>
      <Ic a={2472} b={2553} y={y} h={h} className="bg-[#c6c6c6]">
        <path d="M2500.500 1906h25v24h-25z" fill="none" stroke="#666" strokeWidth="1.400" />
        <Lines c="#666" w={1.400} rows={[[2504, 2522, 1910], [2504, 2522, 1914], [2504, 2522, 1918], [2504, 2522, 1922], [2504, 2522, 1926]]} />
      </Ic>
      <Ic a={2553} b={2630} y={y} h={h}>
        <path d="M2591 1926h-10v-21h21v10" fill="none" stroke="#666" strokeWidth="1.400" /><Lines c="#777" w={1.300} rows={[[2584, 2598, 1909], [2584, 2598, 1913], [2584, 2594, 1917], [2584, 2591, 1921]]} />
        <circle cx="2599.500" cy="1923" r="7.500" fill="#666" /><path d="M2595 1919l4 1-1 4-3-1zM2601 1924l4-3v4l-3 3z" fill="#eee" />
      </Ic>
      <Ic a={2630} b={2923} y={y} h={h}>
        <path d="M2645 1917.500h15M2881 1917.500h15M2888.500 1910v15" stroke="#555" strokeWidth="1.600" /><path d="M2672 1917.500h198" stroke="#ababab" strokeWidth="2.500" /><path d="M2771 1907h10v22h-10z" fill="#707070" />
      </Ic>
      <div className="w-[77px] tracking-[0.3px]">120%</div>
    </div>
  );
}

const SLogo = ({ cx, cy, k }: { cx: number; cy: number; k: number }) => (
  <g transform={`translate(${cx} ${cy}) rotate(-10) scale(${k})`}>
    <rect x="-25" y="-25" width="50" height="50" rx="5" fill="#f4511e" />
    <path d="M17-13C8-18-14-18-14-9c0 10 28 4 28 14C14 15-6 15-17 10" fill="none" stroke="#fff" strokeWidth="9" />
  </g>
);

function ImeBar() {
  const y = 1892, h = 46, c = "#2573c4";
  return (
    <div className="absolute top-[1891px] left-[1830px] flex h-[48px] w-[394px] border-2 border-[#aab0bd] bg-white">
      <Ic a={1832} b={1869} y={y} h={h}><SLogo cx={1837} cy={1913} k={1.03} /></Ic>
      <Ic a={1869} b={1917} y={y} h={h}><path d="M1880 1929l12.500-26 12.500 26M1884 1920h17" fill="none" stroke={c} strokeWidth="3.400" /></Ic>
      <Ic a={1917} b={1955} y={y} h={h}><circle cx="1931" cy="1910" r="3.500" fill={c} /><path d="M1943 1914c5 0 4 8-2 11l-1-1c3-3 3-4 2-5-3-1-2-5 1-5z" fill={c} /></Ic>
      <Ic a={1955} b={2003} y={y} h={h}><circle cx="1979" cy="1916" r="14.500" fill="none" stroke={c} strokeWidth="3" /><ellipse cx="1974.500" cy="1912" rx="2" ry="3.500" fill={c} /><ellipse cx="1983.500" cy="1912" rx="2" ry="3.500" fill={c} /><path d="M1972 1920c3 5 11 5 14 0" fill="none" stroke={c} strokeWidth="2.200" /></Ic>
      <Ic a={2003} b={2045} y={y} h={h}><rect x="2019" y="1900" width="11" height="20" rx="5.500" fill={c} /><path d="M2014 1913c0 14 21 14 21 0M2024.500 1923v6M2018 1930.500h13" fill="none" stroke={c} strokeWidth="2.800" /></Ic>
      <Ic a={2045} b={2092} y={y} h={h}><rect x="2052" y="1904" width="32" height="24" rx="3" fill={c} /><path d="M2056 1910.500h25M2056 1915.500h25" stroke="#fff" strokeWidth="3" strokeDasharray="3 2.400" /><path d="M2056 1922.500h4M2062 1922.500h13M2077 1922.500h4" stroke="#fff" strokeWidth="3" /></Ic>
      <Ic a={2092} b={2138} y={y} h={h}><circle cx="2111" cy="1908" r="6" fill={c} /><path d="M2099 1927c0-8 4-11 9-11h6c4 0 7 2 8 6v7h-23z" fill={c} /><rect x="2109" y="1918" width="25" height="12.500" fill={c} /><path d="M2112.500 1920v5.500h7M2117.500 1920v9M2123 1921.500h7.500v6.500h-7.500M2124.500 1924.700h6" fill="none" stroke="#fff" strokeWidth="1.900" /></Ic>
      <Ic a={2138} b={2178} y={y} h={h}><path d="M2150 1902c3 3 9 3 12 0l9 6-4 7-4-2v17h-14v-17l-4 2-4-7z" fill={c} /></Ic>
      <Ic a={2178} b={2222} y={y} h={h}><path d="M2187 1902h12v12h-12zM2187 1916h12v12h-12zM2201 1916h12v12h-12z" fill={c} /><path d="M2202.500 1903.500h9v9h-9z" fill="none" stroke={c} strokeWidth="2.500" /></Ic>
    </div>
  );
}

/* ---------- taskbar ---------- */
const WeChat = ({ x }: { x: number }) => (
  <g>
    <ellipse cx={x + 12} cy="1966" rx="12" ry="9.500" fill="#7bd14a" /><path d={`M${x + 4} 1972l-1 6 6-3z`} fill="#7bd14a" />
    <circle cx={x + 8} cy="1963" r="1.500" fill="#2a5a1a" /><circle cx={x + 16} cy="1963" r="1.500" fill="#2a5a1a" />
    <ellipse cx={x + 22} cy="1974" rx="10" ry="8" fill="#eef3f7" /><path d={`M${x + 28} 1979l1 5-6-2z`} fill="#eef3f7" />
    <circle cx={x + 19} cy="1972" r="1.200" fill="#777" /><circle cx={x + 25} cy="1972" r="1.200" fill="#777" />
  </g>
);

function Taskbar() {
  const y = 1940, h = 60;
  return (
    <div className="flex h-[60px] shrink-0 bg-[#05101d] leading-[60px] text-white">
      <Ic a={0} b={72} y={y} h={h}><path d="M20 1958l13-2v13H20zM34.500 1955.800l17.500-2.300V1969H34.500zM20 1970.500h13v13l-13-2zM34.500 1970.500H52v16l-17.500-2.500z" fill="#fff" /></Ic>
      <Ic a={72} b={145} y={y} h={h}><circle cx="108" cy="1970" r="13.500" fill="none" stroke="#fff" strokeWidth="3.600" /></Ic>
      <Ic a={145} b={220} y={y} h={h}><path d="M165 1955v5h19v-5M165 1985v-5h19v5M165 1964h19v12h-19zM193 1955v5M193 1971v14" fill="none" stroke="#fff" strokeWidth="2.200" /><circle cx="193" cy="1966" r="3" fill="#fff" /></Ic>
      <Ic a={220} b={304} y={y} h={h}><rect x="244" y="1957" width="29" height="27" rx="3" fill="#f6f3f0" /><path d="M245 1974c2-8 5-12 9-19l4 3c-1 9-3 13-7 19z" fill="#2a9a2e" /><path d="M256 1958c8 6 12 14 14 22l-12 3c2-9 1-17-4-22z" fill="#df2a1a" /></Ic>
      <Ic a={304} b={360} y={y} h={h}><path d="M318 1959h11l3 2h14v20h-28z" fill="#f3cf6b" /><path d="M318 1964h28v17h-28z" fill="#fce29a" /><path d="M322 1972h20v9h-6v-5h-8v5h-6z" fill="#3d9fdd" /><path d="M304 1996h56v4h-56z" fill="#84bce9" /></Ic>
      <Ic a={360} b={445} y={y} h={h}><WeChat x={390} /></Ic>
      <Ic a={445} b={517} y={y} h={h}><circle cx="480" cy="1970" r="14" fill="#6cc02c" stroke="#d8efc4" strokeWidth="1.500" /><path d="M488 1974c-4 5-14 5-15-3 0-9 14-10 15-1h-14" fill="none" stroke="#fff" strokeWidth="3.200" /><path d="M470 1981c-3-8 14-24 22-25" fill="none" stroke="#4a9b1d" strokeWidth="2" /></Ic>
      <Ic a={517} b={590} y={y} h={h}><path d="M538 1954h25l7 7v24h-32z" fill="#fff" /><path d="M540 1956h22l6 6v21h-28z" fill="#1e5a8a" /><G x={554} y={1975} s={13} w={700} c="#fff">HDX</G></Ic>
      <Ic a={590} b={665} y={y} h={h}><rect x="612" y="1954" width="32" height="32" rx="5" fill="#4268cf" /><g fill="none" stroke="#fff" strokeWidth="3"><circle cx="628" cy="1965" r="5" /><circle cx="621.500" cy="1974" r="4.500" /><circle cx="634.500" cy="1974" r="4.500" /></g></Ic>
      <Ic a={665} b={740} y={y} h={h}><path d="M690 1956h22l6 5-3 23h-29z" fill="#1088f5" /><path d="M691 1967l13-9 13 8-1 5-7-4-2 17h-8l1-16-8 2z" fill="#fff" /></Ic>
      <Ic a={740} b={815} y={y} h={h}><rect x="770" y="1957" width="18" height="20" rx="3" fill="none" stroke="#5fb4bd" strokeWidth="4.500" /><rect x="765" y="1963" width="17" height="19" rx="3" fill="none" stroke="#f0a92c" strokeWidth="4.500" /></Ic>
      <Ic a={815} b={888} y={y} h={h}><path d="M862 1957l-14 3-9 10 1 10 4 3h10l5-5v-7h-9" fill="none" stroke="#d8281f" strokeWidth="5.500" /></Ic>
      <Ic a={888} b={960} y={y} h={h}><rect x="908" y="1954" width="32" height="32" rx="3" fill="#eef1fb" /><path d="M914 1963l12 4 9-9c0 4-1 6-3 9l4-1c-3 4-5 5-6 8l4 4c-5-1-8 0-11 6 0-4-1-5-3-7-4-3-6-8-6-14z" fill="#8f95e0" /></Ic>
      <Ic a={960} b={1044} y={y} h={h}><rect x="982" y="1954" width="32" height="32" rx="6" fill="#fff" /><g fill="none" strokeWidth="3"><circle cx="991.500" cy="1973" r="4.500" stroke="#36b4e8" /><circle cx="1004.500" cy="1973" r="4.500" stroke="#36b4e8" /><circle cx="998" cy="1965" r="5" stroke="#ee4a55" /></g><path d="M992 1985h6" stroke="#ee4a55" strokeWidth="2" /><path d="M998 1985h6" stroke="#3a7be0" strokeWidth="2" /></Ic>
      <Ic a={1044} b={1110} y={y} h={h}><rect x="1056" y="1954" width="32" height="32" rx="2" fill="#1474d4" /><path d="M1064 1963h16v14h-16zM1061 1963v14" fill="none" stroke="#fff" strokeWidth="2" /><path d="M1069 1966l6 4-6 4z" fill="#fff" /><path d="M1082 1968l4-3v10l-4-3z" fill="#fff" /><path d="M1044 1996h56v4h-56z" fill="#84bce9" /></Ic>
      <Ic a={1110} b={1182} y={y} h={h} className="bg-[#3c4653]"><path d="M1138 1956h24v8h-24z" fill="#41a5ee" /><path d="M1138 1964h24v7h-24z" fill="#2b7cd3" /><path d="M1138 1971h24v12h-24z" fill="#1a4fa8" /><rect x="1129" y="1961" width="18" height="17" rx="1.500" fill="#1f4fa6" /><G x={1138} y={1974} s={12.500} w={700} c="#fff">W</G><path d="M1110 1996h72v4h-72z" fill="#84bce9" /></Ic>
      <Ic a={2400} b={2460} y={y} h={h} className="ml-auto"><g fill="none" stroke="#fff" strokeWidth="2.200"><circle cx="2434" cy="1961" r="5" /><circle cx="2422" cy="1972" r="5" /><path d="M2414 1985c0-10 16-10 16 0M2428 1969c6-4 13 0 13 6" /></g></Ic>
      <Ic a={2460} b={2530} y={y} h={h}><path d="M2483 1976l13-12 13 12" fill="none" stroke="#fff" strokeWidth="2" /></Ic>
      <Ic a={2530} b={2595} y={y} h={h}><WeChat x={2544} /></Ic>
      <Ic a={2595} b={2655} y={y} h={h}><circle cx="2624" cy="1970" r="15" fill="#f2d22c" /><path d="M2610 1965c4-12 20-12 27-3-8-4-16-3-20 2zM2637 1976c-4 11-20 12-26 2 8 4 15 2 19-3z" fill="#2aa43a" /><path d="M2624 1963v14M2617 1970h14" stroke="#1f9434" strokeWidth="4" /></Ic>
      <Ic a={2655} b={2705} y={y} h={h}><path d="M2668 1985l11-28 11 28M2672 1976h14" fill="none" stroke="#fff" strokeWidth="2.200" /></Ic>
      <Ic a={2705} b={2777} y={y} h={h}><SLogo cx={2736} cy={1970} k={0.540} /></Ic>
      <div className="w-[66px]">3/11</div>
      <div className="w-[61px]">0:56</div>
      <Ic a={2904} b={3000} y={y} h={h}><path d="M2918 1954h32v26h-12l-4 6-4-6h-12z" fill="#fff" /><path d="M2924 1961h20M2924 1967h20M2924 1973h13" stroke="#05101d" strokeWidth="2" /><path d="M2990.500 1940v60" stroke="#8a929c" strokeWidth="1.500" /></Ic>
    </div>
  );
}

export default function App() {
  return (
    <div className="relative flex h-[2000px] w-[3000px] flex-col overflow-hidden bg-[#2b579a] font-['Open_Sans','Noto_Sans_CJK_SC',sans-serif] text-[24px]">
      <TitleBar />
      <TabRow />
      <Ribbon />
      <div className="flex h-[1581px] shrink-0 bg-[#e6e6e6]">
        <NavPane />
        <Page />
      </div>
      <StatusBar />
      <Taskbar />
      <Dialog />
      <ImeBar />
      <svg className="absolute top-[672px] left-[1988px]" width="28" height="42" viewBox="0 0 28 42"><path d="M2 2v32l7-7 6 13 5-2-6-13h10z" fill="#fff" stroke="#222" strokeWidth="1.400" /></svg>
      <div className="absolute top-[1623px] left-[2980px] flex h-[114px] w-[16px] flex-col rounded-[7px] border-[1.500px] border-[#5a5a5a] bg-[#606060] shadow-[0_0_3px_2px_rgba(255,255,255,0.6)]">
        <div className="mt-[54px] mb-[2px] flex-1 rounded-b-[6px] bg-[repeating-linear-gradient(#2d8049_0_3px,#5fbf78_3px_6px)]" />
      </div>
    </div>
  );
}
